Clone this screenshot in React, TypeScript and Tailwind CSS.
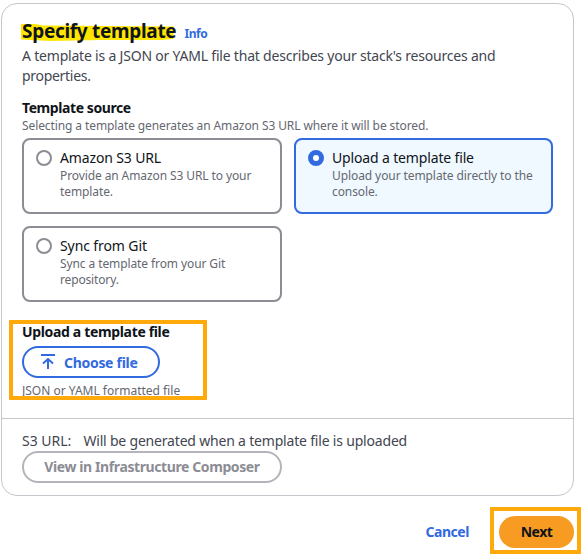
import React from "react";

type TileProps = {
  label: React.ReactNode;
  lines: React.ReactNode;
  selected?: boolean;
};

function Tile({ label, lines, selected = false }: TileProps) {
  return (
    <div
      className={
        selected
          ? "flex h-[76px] w-[259px] gap-2 rounded-lg border-2 border-[#326adf] bg-[#f0f9ff] pl-3 pt-2.5"
          : "flex h-[76px] w-[260px] gap-2 rounded-lg border-2 border-[#8c8c94] bg-white pl-3 pt-2.5"
      }
    >
      <span
        className={
          selected
            ? "size-4 shrink-0 rounded-full border-[5px] border-[#326adf] bg-white"
            : "size-4 shrink-0 rounded-full border-2 border-[#8c8c94] bg-white"
        }
      />
      <div className="-mt-0.5 whitespace-nowrap">
        <div className="text-[14px] leading-5 text-[#0f141a]">{label}</div>
        <div className="text-[12px] leading-4 text-[#656871]">{lines}</div>
      </div>
    </div>
  );
}

export default function App() {
  return (
    <div className="relative h-[555px] w-[581px] overflow-hidden bg-white pl-px pt-[3px] font-['Noto_Sans',sans-serif]">
      <main className="h-[493px] w-[573px] whitespace-nowrap rounded-2xl border border-[#c6c6cd] bg-white">
        <section className="h-[414px] px-5 pt-[15px]">
          <header className="flex h-6 items-baseline gap-2">
            <h2 className="relative text-[19px] font-bold leading-6 text-[#0f141a]">
              <svg className="absolute -left-px top-[3px]" width="154" height="20" viewBox="0 0 154 20">
                <path d="M0 2 L14 2 L22 3.500 L153 4.500 L152 17 L140 18 L80 18 L30 19 L0 17.500 Z" fill="#ffe600" />
              </svg>
              <span className="relative tracking-[-0.3px]">Specify template</span>
            </h2>
            <a className="text-[12px] font-bold text-[#326adf]">
              <span className="tracking-[-0.4px]">Info</span>
            </a>
          </header>
          <p className="mt-[3px] text-[14px] leading-5 text-[#424650]">
            <span className="tracking-[-0.2px]">A template is a JSON or YAML file that describes your stack's resources and</span>
            <br />
            <span className="tracking-[-0.3px]">properties.</span>
          </p>
          <h3 className="mt-3 text-[14px] font-bold leading-5 text-[#0f141a]">
            <span className="tracking-[-0.42px]">Template source</span>
          </h3>
          <p className="text-[12px] leading-4 text-[#656871]">
            <span className="tracking-[-0.1px]">Selecting a template generates an Amazon S3 URL where it will be stored.</span>
          </p>
          <div className="mt-1 grid grid-cols-[260px_259px] gap-3">
            <Tile
              label={<span className="tracking-[-0.14px]">Amazon S3 URL</span>}
              lines={
                <>
                  <span className="tracking-[-0.1px]">Provide an Amazon S3 URL to your</span>
                  <br />
                  <span className="tracking-[-0.1px]">template.</span>
                </>
              }
            />
            <Tile
              selected
              label={<span className="tracking-[-0.15px]">Upload a template file</span>}
              lines={
                <>
                  <span className="tracking-[-0.09px]">Upload your template directly to the</span>
                  <br />
                  <span className="tracking-[-0.1px]">console.</span>
                </>
              }
            />
            <Tile
              label={<span className="tracking-[-0.1px]">Sync from Git</span>}
              lines={
                <>
                  <span className="tracking-[-0.1px]">Sync a template from your Git</span>
                  <br />
                  <span className="tracking-[-0.15px]">repository.</span>
                </>
              }
            />
          </div>
          <h3 className="mt-5 text-[14px] font-bold leading-5 text-[#0f141a]">
            <span className="tracking-[-0.34px]">Upload a template file</span>
          </h3>
          <button className="mt-1 flex h-8 w-[138px] items-center gap-2 rounded-full border-2 border-[#326adf] pl-4 text-[14px] font-bold text-[#326adf]">
            <svg width="16" height="16" viewBox="0 0 16 16" fill="none" stroke="currentColor" strokeWidth="2">
              <path d="M1 1h14M8 15V5M3 9.5 8 5l5 4.5" />
            </svg>
            <span className="tracking-[-0.3px]">Choose file</span>
          </button>
          <p className="mt-[5px] text-[12px] leading-4 text-[#656871]">
            <span>JSON or YAML formatted file</span>
          </p>
        </section>
        <footer className="border-t border-[#c6c6cd] px-5 pt-3">
          <p className="flex gap-3 text-[14px] leading-5 text-[#424650]">
            <span>S3 URL:</span>
            <span className="tracking-[-0.19px]">Will be generated when a template file is uploaded</span>
          </p>
          <button className="flex h-8 w-[260px] items-center justify-center rounded-full border-2 border-[#b4b4bb] pb-px text-[14px] font-bold text-[#8c8c94]">
            <span className="tracking-[-0.4px]">View in Infrastructure Composer</span>
          </button>
        </footer>
      </main>
      <div className="flex items-center justify-end pt-[11px]">
        <a className="mr-[21px] pt-0.5 text-[14px] font-bold text-[#326adf]">
          <span className="tracking-[-0.45px]">Cancel</span>
        </a>
        <div className="flex h-[47px] w-[91px] border-4 border-[#ffa90a] pl-[5px] pt-[5px]">
          <button className="h-8 w-[75px] shrink-0 rounded-full bg-[#f79b22] pb-0.5 text-[14px] font-bold text-[#0f141a]">
            <span className="tracking-[-0.5px]">Next</span>
          </button>
        </div>
      </div>
      <div className="absolute left-[9px] top-[320px] h-20 w-[198px] border-4 border-[#ffa90a]" />
    </div>
  );
}
